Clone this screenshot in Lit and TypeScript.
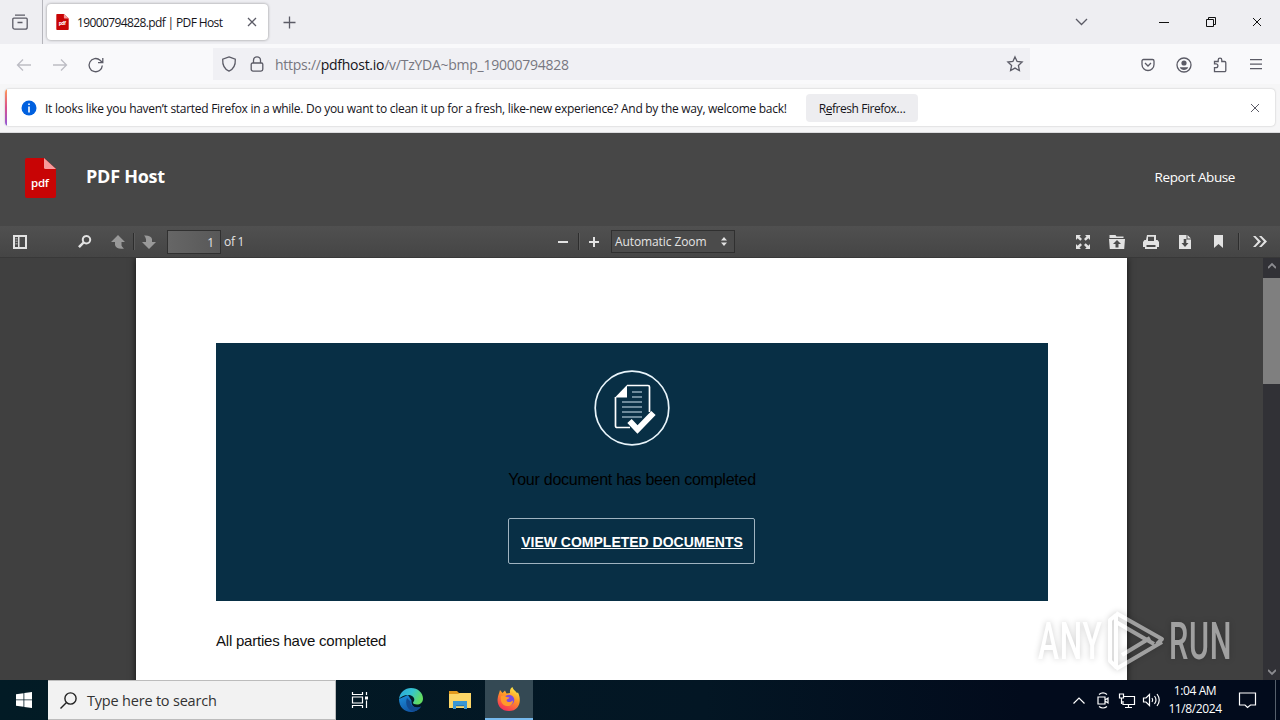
/**
 * Browser window with a PDF viewer on a Windows desktop
 */
import { LitElement, html, css, svg, TemplateResult } from 'lit'
import { customElement } from 'lit/decorators.js'

const icon = (w: number, h: number, body: TemplateResult, cls = '') => html`
  <svg class="icon ${cls}" width=${w} height=${h} viewBox="0 0 ${w} ${h}">${body}</svg>
`

const icons = {
  view: svg`<path d="M3 1.2h10M1.8 4.2h12.4a1 1 0 0 1 1 1v8a2 2 0 0 1-2 2H2.8a2 2 0 0 1-2-2v-8a1 1 0 0 1 1-1zM5.5 8.5h5"/>`,
  close: svg`<path d="M1 1l8 8M9 1l-8 8"/>`,
  plus: svg`<path d="M6.5 .5v12M.5 6.5h12"/>`,
  chevron: svg`<path d="M1 1l5.5 5.5L12 1"/>`,
  minimize: svg`<path d="M0 .5h10"/>`,
  restore: svg`<path d="M.5 2.5h7v7h-7zM2.5 2.5v-2h7v7h-2"/>`,
  back: svg`<path d="M15 8H1.5M7 2.5L1.5 8 7 13.5"/>`,
  forward: svg`<path d="M1 8h13.5M9 2.5L14.500 8 9 13.500"/>`,
  reload: svg`<path d="M14.300 8.500a6.600 6.600 0 1 1-2.200-5.300l2 2M14.800 1v4.700H10"/>`,
  shield: svg`<path d="M8 .9l6.300 2.300c.3 5.300-1.400 9.700-6.300 11.900C3.100 12.900 1.400 8.500 1.700 3.200z"/>`,
  lock: svg`<path d="M3.500 7h9a1.300 1.300 0 0 1 1.300 1.300v5a1.800 1.800 0 0 1-1.800 1.800H4a1.800 1.800 0 0 1-1.800-1.800v-5A1.300 1.300 0 0 1 3.500 7zM4.500 7V4.300a3.500 3.500 0 0 1 7 0V7"/>`,
  star: svg`<path d="M8 .9l2.100 4.600 5 .6-3.700 3.400 1 5.100L8 12.100l-4.400 2.500 1-5.100L.9 6.100l5-.6z"/>`,
  pocket: svg`<path d="M2.500 2.500h9a1.500 1.500 0 0 1 1.500 1.500v3.500a6 6 0 0 1-12 0V4a1.500 1.500 0 0 1 1.500-1.500zM4 6l3 3 3-3"/>`,
  account: svg`<circle cx="8" cy="8" r="7"/><circle class="fill" cx="8" cy="6" r="2.600"/><path class="fill" d="M3.800 10.200h8.400c-.6 1.800-2.300 2.700-4.200 2.700s-3.600-.9-4.200-2.700z"/>`,
  puzzle: svg`<path d="M2.500 14.700V10.700H4a1.900 1.900 0 1 0 0-3.800H2.500V4.500H6.200V3a1.800 1.800 0 0 1 3.600 0v1.500h2.800a1.200 1.200 0 0 1 1.200 1.200v7.800a1.200 1.200 0 0 1-1.200 1.200z"/>`,
  menu: svg`<path d="M0 .7h12M0 5.200h12M0 9.700h12"/>`,
}

const viewerIcons = {
  sidebar: svg`<path fill-rule="evenodd" d="M0 0h14v14H0zM2 2v10h3V2zM6.500 2v10H12V2z"/><path opacity=".5" d="M2.500 3h2v1.500h-2zM2.500 5.500h2V7h-2zM2.500 8h2v1.500h-2z"/>`,
  search: svg`<path fill-rule="evenodd" d="M8.500 0a4.700 4.700 0 1 1-2.500 8.700L1.900 13 0 11.200 4.400 7A4.700 4.700 0 0 1 8.500 0zm0 2a2.700 2.700 0 1 0 0 5.400 2.700 2.700 0 0 0 0-5.400z"/>`,
  up: svg`<path d="M7 0l7 7h-3.500v3.500q.5 1.500 2.500 3Q5 14.500 4 10V7H0z"/>`,
  down: svg`<path d="M7 14L0 7h4Q4.500 3 2 .5 9 0 10 4v3h4z"/>`,
  minus: svg`<path d="M0 0h10v2H0z"/>`,
  plus: svg`<path d="M4 0h2v4h4v2H6v4H4V6H0V4h4z"/>`,
  updown: svg`<path d="M3 0l3 3.500H0zM3 9l3-3.500H0z"/>`,
  full: svg`<path d="M0 0h5L3.500 1.500 6 4 4.300 5.700 1.600 3.200 0 5zM14 0v5l-1.600-1.800-2.700 2.500L8 4l2.500-2.500L9 0zM0 14V9l1.600 1.800 2.700-2.500L6 10l-2.500 2.500L5 14zM14 14H9l1.500-1.500L8 10l1.700-1.700 2.700 2.500L14 9z"/>`,
  open: svg`<path fill-rule="evenodd" d="M.5 0h6l1 1.500h7V3H.5zM0 4h16l-.8 10H.8zM8 5L4 9h2.500v3.500h3V9H12z"/>`,
  print: svg`<path fill-rule="evenodd" d="M4 0h9v5h1.500L16 7v5h-2v2H2v-2H0V7l1.500-2H3zM5 1.800V6h6V1.800zM3.500 10v2h9v-2z"/>`,
  save: svg`<path fill-rule="evenodd" d="M0 0h7.500v4.500H12V14H0zM4.700 4v4H2.500L6 12l3.500-4H7.300V4zM8.500 0L12 3.500H8.500z"/>`,
  bookmark: svg`<path d="M0 0h9v13L4.500 9 0 13z"/>`,
  more: svg`<path d="M0 0h2.500L8 5.500 2.500 11H0l5-5.500zM6 0h2.500L14 5.500 8.500 11H6l5-5.500z"/>`,
}

const pdfLogo = (w: number, h: number) => html`
  <svg class="icon" width=${w} height=${h} viewBox="0 0 31 40">
    <path fill="#c80405" d="M2 0h17l12 11v27a2 2 0 0 1-2 2H2a2 2 0 0 1-2-2V2a2 2 0 0 1 2-2z"/>
    <path fill="#f79b9b" d="M19 0l12 11H20.500a1.500 1.500 0 0 1-1.500-1.500z"/>
    <text x="6" y="28.500" textLength="18" class="logo-text">pdf</text>
  </svg>
`

@customElement('browser-chrome')
export class BrowserChrome extends LitElement {
  static styles = css`
    :host {
      display: block;
      height: 133px;
      font: 12px 'Open Sans', 'Noto Sans', sans-serif;
      color: #15141a;
    }
    div, button, header, nav { box-sizing: border-box; }
    .icon {
      display: block;
      flex: none;
      fill: none;
      stroke: #5b5b66;
      stroke-width: 1.3;
      overflow: visible;
    }
    .fill { fill: #5b5b66; stroke: none; }
    .logo-text { font: bold 12px 'Open Sans'; fill: #fff; }
    .tab .icon path[fill], .logo-text { stroke: none; }

    .tabs {
      display: flex;
      align-items: center;
      height: 44px;
      padding-left: 12px;
      background: #eeeef2;
    }
    .divider { width: 1px; height: 44px; margin-left: 14px; background: #b5b5bb; }
    .tab {
      display: flex;
      align-items: center;
      width: 221px;
      height: 36px;
      margin-left: 4px;
      padding: 0 11px 0 9px;
      border-radius: 4px;
      background: #fff;
      box-shadow: 0 0 3px rgba(0, 0, 0, 0.4);
    }
    .title { flex: 1; margin-left: 8px; letter-spacing: -0.62px; white-space: nowrap; }
    .plus { margin-left: 15px; }
    .window { display: flex; align-items: center; margin-left: auto; padding-right: 18px; }
    .window .icon { stroke: #111; stroke-width: 1; }
    .window .caret { margin-right: 71px; stroke: #5b5b66; stroke-width: 1.3; }
    .window .min { margin-right: 37px; }
    .window .restore { margin-right: 36px; }

    .nav {
      display: flex;
      align-items: center;
      height: 40px;
      padding: 1px 18px 0 16px;
      gap: 20px;
      background: #f9f9fb;
    }
    .off { stroke: #bdbdc4; }
    .url {
      display: flex;
      align-items: center;
      width: 817px;
      height: 32px;
      margin: -1px 0 0 89px;
      padding: 0 7px 0 8px;
      background: #f0f0f4;
      font-size: 14px;
      color: #777780;
    }
    .url b { font-weight: 400; color: #15141a; }
    .url .lock { margin-left: 12px; }
    .address { flex: 1; margin-left: 10px; padding-top: 1px; letter-spacing: -0.26px; }
    .tools { display: flex; align-items: center; margin-left: auto; }
    .tools .account { margin: 0 20px 0 21px; }
    .tools .menu { margin-left: 22px; }

    .notice {
      display: flex;
      height: 49px;
      padding: 5px 5px 6px;
      border-bottom: 1px solid #dcdcde;
      background: #f6f6f7;
    }
    .card {
      display: flex;
      align-items: center;
      flex: 1;
      padding-right: 15px;
      border-radius: 4px;
      background: #fff;
      box-shadow: 0 0 2px rgba(0, 0, 0, 0.25);
      overflow: hidden;
    }
    .stripe { width: 2px; height: 100%; background: linear-gradient(#ff9a56, #d9508e, #9059d8); }
    .info { margin-left: 14px; stroke: none; }
    .message { margin-left: 8px; padding-top: 2px; width: 761px; letter-spacing: -0.285px; white-space: nowrap; }
    button {
      width: 112px;
      height: 28px;
      padding: 2px 0 0;
      border: none;
      border-radius: 4px;
      background: #ededf0;
      font: inherit;
      color: inherit;
      letter-spacing: -0.45px;
    }
    .dismiss { margin-left: auto; stroke-width: 1; }
  `

  render() {
    return html`
      <header class="tabs">
        ${icon(16, 16, icons.view)}
        <div class="divider"></div>
        <div class="tab">
          ${pdfLogo(13, 16)}
          <span class="title">19000794828.pdf | PDF Host</span>
          ${icon(10, 10, icons.close)}
        </div>
        ${icon(13, 13, icons.plus, 'plus')}
        <div class="window">
          ${icon(13, 8, icons.chevron, 'caret')}
          ${icon(10, 1, icons.minimize, 'min')}
          ${icon(10, 10, icons.restore, 'restore')}
          ${icon(10, 10, icons.close)}
        </div>
      </header>
      <nav class="nav">
        ${icon(16, 16, icons.back, 'off')}
        ${icon(16, 16, icons.forward, 'off')}
        ${icon(16, 16, icons.reload)}
        <div class="url">
          ${icon(16, 16, icons.shield)}
          ${icon(16, 16, icons.lock, 'lock')}
          <span class="address">https://<b>pdfhost.io</b>/v/TzYDA~bmp_19000794828</span>
          ${icon(16, 16, icons.star)}
        </div>
        <div class="tools">
          ${icon(14, 16, icons.pocket)}
          ${icon(16, 16, icons.account, 'account')}
          ${icon(16, 16, icons.puzzle)}
          ${icon(12, 11, icons.menu, 'menu')}
        </div>
      </nav>
      <div class="notice">
        <div class="card">
          <div class="stripe"></div>
          ${icon(16, 16, svg`<circle cx="8" cy="8" r="7.500" fill="#0060df"/><path fill="#fff" d="M7.200 3.500h1.600v1.600H7.200zM7.200 6.500h1.600v6H7.200z"/>`, 'info')}
          <span class="message">It looks like you haven’t started Firefox in a while. Do you want to clean it up for a fresh, like-new experience? And by the way, welcome back!</span>
          <button>R<u>e</u>fresh Firefox…</button>
          ${icon(10, 10, icons.close, 'dismiss')}
        </div>
      </div>
    `
  }
}

@customElement('pdf-viewer')
export class PdfViewer extends LitElement {
  static styles = css`
    :host {
      display: block;
      height: 547px;
      font: 12px 'Open Sans', 'Noto Sans', sans-serif;
      color: #e4e4e4;
      background: #404040;
    }
    div, header { box-sizing: border-box; }
    .icon { display: block; flex: none; fill: #e2e2e2; }
    .logo-text { font: 600 11.5px 'Open Sans'; fill: #fff; }

    .site {
      display: flex;
      align-items: center;
      height: 93px;
      padding: 0 45px 3px 25px;
      background: #474747;
      color: #fff;
    }
    .name { margin: -5px 0 0 30px; font-size: 18px; font-weight: 700; letter-spacing: -0.25px; }
    .abuse { margin: -2px 0 0 auto; font-size: 13.5px; letter-spacing: -0.4px; }

    .toolbar {
      display: flex;
      align-items: center;
      height: 31px;
      padding: 0 13px;
      background: linear-gradient(#505050, #454545);
    }
    .dim { fill: #999; }
    .search { margin-left: 51px; }
    .up { margin-left: 19px; }
    .down { margin-left: 8px; }
    .bar { width: 1px; height: 17px; margin-left: 8px; background: #2d2d2d; box-shadow: 1px 0 #5a5a5a; }
    .page-number {
      width: 54px;
      height: 24px;
      margin: 0 3px 0 11px;
      padding-right: 6px;
      border: 1px solid #303030;
      background: linear-gradient(90deg, #666, #585858);
      line-height: 23px;
      text-align: right;
    }
    .total { width: 20px; letter-spacing: -0.3px; white-space: nowrap; }
    .minus { margin-left: 314px; }
    .zoom-bar { margin-left: 10px; }
    .plus { margin-left: 10px; }
    .zoom {
      display: flex;
      align-items: center;
      justify-content: space-between;
      width: 124px;
      height: 23px;
      margin-left: 12px;
      padding: 0 7px 0 3px;
      border: 1px solid #303030;
      background: #4b4b4b;
      letter-spacing: -0.1px;
    }
    .actions { display: flex; align-items: center; margin-left: auto; }
    .open { margin-left: 19px; }
    .print { margin-left: 18px; }
    .save { margin-left: 20px; }
    .mark { margin-left: 23px; }
    .actions .bar { margin: 0 14px 0 15px; }

    .body { display: flex; height: 423px; border-top: 1px solid #383838; }
    .canvas { flex: 1; padding-left: 136px; overflow: hidden; }
    .page {
      width: 991px;
      height: 440px;
      padding: 85px 79px 0 80px;
      background: #fff;
      box-shadow: 0 0 7px rgba(0, 0, 0, 0.75);
      font-family: 'Liberation Sans', Arial, sans-serif;
      color: #111;
    }
    .banner {
      display: flex;
      flex-direction: column;
      align-items: center;
      height: 258px;
      padding-top: 27px;
      background: #082f45;
    }
    .badge { width: 76px; height: 76px; fill: none; }
    .status { height: 20px; margin-top: 24px; color: #000; font-size: 16px; line-height: 20px; letter-spacing: -0.25px; }
    .view {
      display: flex;
      align-items: center;
      justify-content: center;
      width: 247px;
      height: 46px;
      margin: 28px 1px 0 0;
      padding: 1px 0 0 1px;
      border: 1.5px solid #9fb3c0;
      border-radius: 2px;
      color: #fff;
      font-size: 14px;
      font-weight: 700;
      text-decoration: underline;
      white-space: nowrap;
    }
    .done { margin-top: 30px; font-size: 15px; line-height: 20px; letter-spacing: -0.22px; }

    .scrollbar {
      display: flex;
      flex-direction: column;
      align-items: center;
      width: 17px;
      padding: 4px 0;
      background: #313136;
    }
    .scrollbar .icon { fill: none; stroke: #8c8c90; stroke-width: 1.8; }
    .thumb { width: 17px; height: 106px; margin: 8px 0 auto; background: #7f7f7f; }
  `

  render() {
    return html`
      <header class="site">
        ${pdfLogo(31, 40)}
        <span class="name">PDF Host</span>
        <span class="abuse">Report Abuse</span>
      </header>
      <div class="toolbar">
        ${icon(14, 14, viewerIcons.sidebar)}
        ${icon(14, 13, viewerIcons.search, 'search')}
        ${icon(14, 14, viewerIcons.up, 'up dim')}
        <div class="bar"></div>
        ${icon(14, 14, viewerIcons.down, 'down dim')}
        <div class="page-number">1</div>
        <span class="total">of 1</span>
        ${icon(10, 2, viewerIcons.minus, 'minus')}
        <div class="bar zoom-bar"></div>
        ${icon(10, 10, viewerIcons.plus, 'plus')}
        <div class="zoom">
          <span>Automatic Zoom</span>
          ${icon(6, 9, viewerIcons.updown)}
        </div>
        <div class="actions">
          ${icon(14, 14, viewerIcons.full)}
          ${icon(16, 14, viewerIcons.open, 'open')}
          ${icon(16, 14, viewerIcons.print, 'print')}
          ${icon(12, 14, viewerIcons.save, 'save')}
          ${icon(9, 13, viewerIcons.bookmark, 'mark')}
          <div class="bar"></div>
          ${icon(14, 11, viewerIcons.more)}
        </div>
      </div>
      <div class="body">
        <div class="canvas">
          <div class="page">
            <div class="banner">
              <svg class="badge" viewBox="0 0 76 76">
                <circle cx="38" cy="38" r="36.800" stroke="#e8f4fa" stroke-width="1.700"/>
                <path stroke="#fff" stroke-width="1.700" d="M33 15.500h21a1.500 1.500 0 0 1 1.500 1.500v25M36 57.500H23a1.500 1.500 0 0 1-1.500-1.500V27"/>
                <path fill="#fff" d="M21 27.500L33 15v12.500z"/>
                <path stroke="#8fa9b8" stroke-width="1.600" d="M38 22h10M38 27h10M28 32h20M28 37h20M28 42h20M28 47h20"/>
                <path stroke="#fff" stroke-width="6" d="M35.500 51l8 8.500L59.500 43"/>
              </svg>
              <div class="status">Your document has been completed</div>
              <div class="view">VIEW COMPLETED DOCUMENTS</div>
            </div>
            <div class="done">All parties have completed</div>
          </div>
        </div>
        <div class="scrollbar">
          ${icon(8, 8, svg`<path d="M0 6l4-4 4 4"/>`)}
          <div class="thumb"></div>
          ${icon(8, 8, svg`<path d="M0 2l4 4 4-4"/>`)}
        </div>
      </div>
    `
  }
}

@customElement('task-bar')
export class TaskBar extends LitElement {
  static styles = css`
    :host {
      display: flex;
      align-items: center;
      height: 40px;
      font: 12px 'Open Sans', 'Noto Sans', sans-serif;
      color: #fff;
      background: linear-gradient(90deg, #021b25, #031624 55%, #020b1c 80%);
    }
    div { box-sizing: border-box; }
    .icon { display: block; flex: none; fill: none; stroke: #fff; stroke-width: 1.2; overflow: visible; }
    .icon .solid { fill: #fff; stroke: none; }
    .app .icon { stroke: none; }
    .app .tasks { stroke: #fff; }
    .start { display: flex; align-items: center; justify-content: center; width: 48px; height: 40px; }
    .search {
      display: flex;
      align-items: center;
      width: 288px;
      height: 40px;
      padding-left: 12px;
      border: 1px solid #bcbcbc;
      border-left: none;
      background: #f2f2f2;
      color: #333;
      font-size: 14.5px;
      letter-spacing: -0.2px;
    }
    .search .icon { stroke: #222; stroke-width: 1.4; margin-right: 10px; }
    .app { display: flex; align-items: center; justify-content: center; width: 48px; height: 40px; }
    .edge-app { width: 54px; }
    .explorer { width: 47px; padding-right: 3px; }
    .active { background: #344954; border-bottom: 2px solid #76b9ed; }
    .tray { display: flex; align-items: center; margin-left: auto; }
    .tray .up { margin-right: 12px; }
    .tray .cam { margin-right: 10px; }
    .tray .net { margin-right: 8px; }
    .clock { width: 56px; margin: 0 16px 0 7px; line-height: 18px; text-align: center; letter-spacing: -0.4px; white-space: nowrap; }
    .edge { width: 1px; height: 40px; margin: 0 4px 0 18px; background: #56606c; }
  `

  render() {
    return html`
      <div class="start">
        ${icon(16, 16, svg`<path class="solid" d="M0 2.300L7.500 1.200v6.300H0zM8.300 1.100L16 0v7.500H8.300zM0 8.300h7.500v6.400L0 13.700zM8.300 8.300H16V16l-7.700-1.100z"/>`)}
      </div>
      <div class="search">
        ${icon(17, 17, svg`<circle cx="10.500" cy="6.500" r="5.600"/><path d="M6.500 10.500l-6 6"/>`)}
        <span>Type here to search</span>
      </div>
      <div class="app">
        ${icon(16, 16, svg`<path d="M.5 0v2.500h10V0M.5 16v-2.500h10V16M.5 5h10v6H.5zM14.500 0v3M14.500 8.500V16"/><path class="solid" d="M13 4.500h3v3h-3z"/>`, 'tasks')}
      </div>
      <div class="app edge-app">
        <svg class="icon" width="24" height="24" viewBox="0 0 24 24">
          <defs>
            <linearGradient id="wave" x1="0" y1="0" x2="1" y2="0.4">
              <stop offset="0" stop-color="#2aa5dc"/>
              <stop offset="0.55" stop-color="#35c3d0"/>
              <stop offset="1" stop-color="#62dc62"/>
            </linearGradient>
            <linearGradient id="sea" x1="0" y1="0" x2="0.6" y2="1">
              <stop offset="0" stop-color="#1c90dd"/>
              <stop offset="1" stop-color="#1153a3"/>
            </linearGradient>
          </defs>
          <path fill="url(#sea)" d="M0 11c0 8 5.500 13 12 13 4.500 0 8-2.500 10-5.500-5 2.500-10 0-9.500-6L9 7z"/>
          <path fill="#124b91" d="M8 10c-2.500 6 1 13 7 13.600 3-.8 5.500-2.600 7-5.100-5 2.500-11 0-10.500-5z"/>
          <path fill="url(#wave)" d="M0 11C1 4 6 0 12 0c7 0 12 5 12 10.500 0 4-3 6-6 6-2.500 0-4-.8-4-1.700s1.300-1.200 1.300-3.300C15.300 9 12.500 7 9 7c-4 0-7.500 2-9 4z"/>
        </svg>
      </div>
      <div class="app explorer">
        ${icon(22, 20, svg`<path fill="#e29a1d" d="M0 1h8l2 2h11v4H0z"/><path fill="#fcd667" d="M0 4h9l2-1h11v15H0z"/><path fill="#3a97d4" d="M4 11h14v8h-3v-4H7v4H4z"/><path fill="#2a79b5" d="M7 15h8v1.200H7z"/>`)}
      </div>
      <div class="app active">
        <svg class="icon" width="24" height="24" viewBox="0 0 24 24">
          <defs>
            <linearGradient id="fire" x1="0.8" y1="0" x2="0.3" y2="1">
              <stop offset="0" stop-color="#fff04a"/>
              <stop offset="0.45" stop-color="#ff9526"/>
              <stop offset="1" stop-color="#f52c5c"/>
            </linearGradient>
          </defs>
          <path fill="url(#fire)" d="M3 3l2.500 3L8 3.500l1.500 3L13 6c-.5-3 .8-5 2.500-6 .5 3 3 3.500 4.500 6l1-.5c4 8 1.500 18.500-9 18.500C4 24 0 18 .6 12 1 8 2 7 3 3z"/>
          <circle cx="12" cy="13" r="5.300" fill="#7b4be0"/>
          <path fill="#ff9b2a" d="M4 9c2-1 4-.5 5.500 1l3 .5c-.5 1.500-3 1.500-3 3 1 2.500 5 1.500 6.500 0 0 4-3 6-6 5.500C5 18.500 3 14 4 9z"/>
        </svg>
      </div>
      <div class="tray">
        ${icon(12, 7, svg`<path d="M.5 6.500L6 1l5.500 5.500"/>`, 'up')}
        ${icon(12, 16, svg`<path d="M1 5h7v7H1zM8 8l3-2v5l-3-2M2 2.500Q6-.8 10 2.500M2 14.500q4 3 8 0"/>`, 'cam')}
        ${icon(16, 15, svg`<path d="M5 3.500h10.500v8H4V8M.5 1h4v4h-4zM2.500 5v6M9.500 11.500v3M6 14.500h7"/>`, 'net')}
        ${icon(17, 14, svg`<path d="M.5 5H3l3.500-3.500v11L3 9H.5zM9 5q1.500 2 0 4M11.500 3q3 4 0 8M14 1q4.500 6 0 12"/>`)}
        <div class="clock">1:04 AM<br>11/8/2024</div>
        ${icon(18, 16, svg`<path d="M.5 1h16v12h-5L8.500 15.500 6 13H.5z"/>`)}
        <div class="edge"></div>
      </div>
    `
  }
}

@customElement('app-root')
export class AppRoot extends LitElement {
  static styles = css`
    :host {
      position: relative;
      display: block;
      width: 1280px;
      height: 720px;
      overflow: hidden;
    }
    .watermark {
      position: absolute;
      left: 1030px;
      top: 603px;
      opacity: 0.5;
      filter: drop-shadow(0 0 3px rgba(0, 0, 0, 0.4));
    }
    .watermark text { font: 500 51px Roboto, sans-serif; fill: #fff; }
    .watermark path { fill: none; stroke: #fff; stroke-width: 4; stroke-linejoin: round; }
  `

  render() {
    return html`
      <browser-chrome></browser-chrome>
      <pdf-viewer></pdf-viewer>
      <task-bar></task-bar>
      <svg class="watermark" width="210" height="76" viewBox="0 0 210 76">
        <text transform="translate(8 56) scale(.62 1)" textLength="103">ANY</text>
        <text transform="translate(139 56) scale(.6 1)" textLength="104">RUN</text>
        <path d="M80 58V17l6-5v52zM86 10l46 26-5 5M86 19l38 22M86 66l46-27M92 52l28-17"/>
      </svg>
    `
  }
}

declare global {
  interface HTMLElementTagNameMap {
    'app-root': AppRoot
    'browser-chrome': BrowserChrome
    'pdf-viewer': PdfViewer
    'task-bar': TaskBar
  }
}
